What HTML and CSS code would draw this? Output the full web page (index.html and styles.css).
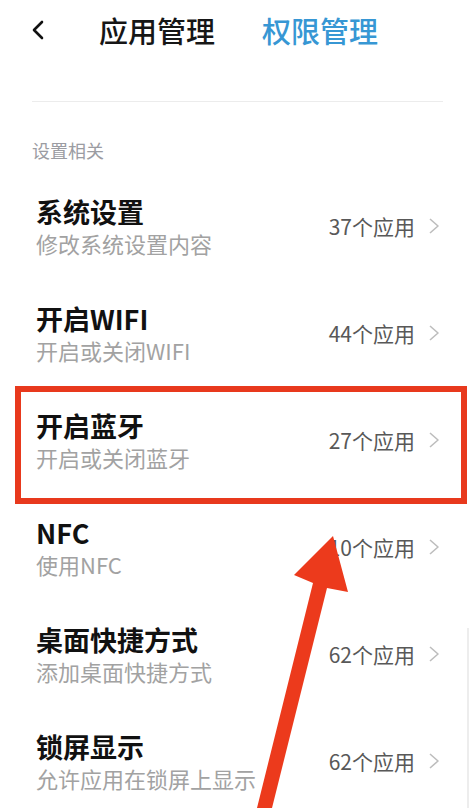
FILE: index.html
```html
<!DOCTYPE html>
<html lang="zh-CN">
<head>
<meta charset="utf-8">
<link rel="stylesheet" href="styles.css">
</head>
<body>
<div class="screen">
  <header class="topbar">
    <svg class="back" width="14" height="20" viewBox="0 0 14 20"><polyline points="11,2 3,10 11,18" fill="none" stroke="#111" stroke-width="2.6" stroke-linecap="round" stroke-linejoin="round"/></svg>
    <span class="tab">应用管理</span>
    <span class="tab active">权限管理</span>
  </header>
  <div class="divider"></div>
  <div class="section-label">设置相关</div>
  <ul class="list">
    <li class="row"><div class="text"><div class="title">系统设置</div><div class="sub">修改系统设置内容</div></div><div class="count">37个应用</div><svg class="chev" width="12" height="18" viewBox="0 0 12 18"><polyline points="2,2 10,9 2,16" fill="none" stroke="#bdbdbd" stroke-width="1.6" stroke-linejoin="round"/></svg></li>
    <li class="row"><div class="text"><div class="title">开启WIFI</div><div class="sub">开启或关闭WIFI</div></div><div class="count">44个应用</div><svg class="chev" width="12" height="18" viewBox="0 0 12 18"><polyline points="2,2 10,9 2,16" fill="none" stroke="#bdbdbd" stroke-width="1.6" stroke-linejoin="round"/></svg></li>
    <li class="row"><div class="text"><div class="title">开启蓝牙</div><div class="sub">开启或关闭蓝牙</div></div><div class="count">27个应用</div><svg class="chev" width="12" height="18" viewBox="0 0 12 18"><polyline points="2,2 10,9 2,16" fill="none" stroke="#bdbdbd" stroke-width="1.6" stroke-linejoin="round"/></svg></li>
    <li class="row"><div class="text"><div class="title">NFC</div><div class="sub">使用NFC</div></div><div class="count">10个应用</div><svg class="chev" width="12" height="18" viewBox="0 0 12 18"><polyline points="2,2 10,9 2,16" fill="none" stroke="#bdbdbd" stroke-width="1.6" stroke-linejoin="round"/></svg></li>
    <li class="row"><div class="text"><div class="title">桌面快捷方式</div><div class="sub">添加桌面快捷方式</div></div><div class="count">62个应用</div><svg class="chev" width="12" height="18" viewBox="0 0 12 18"><polyline points="2,2 10,9 2,16" fill="none" stroke="#bdbdbd" stroke-width="1.6" stroke-linejoin="round"/></svg></li>
    <li class="row"><div class="text"><div class="title">锁屏显示</div><div class="sub">允许应用在锁屏上显示</div></div><div class="count">62个应用</div><svg class="chev" width="12" height="18" viewBox="0 0 12 18"><polyline points="2,2 10,9 2,16" fill="none" stroke="#bdbdbd" stroke-width="1.6" stroke-linejoin="round"/></svg></li>
  </ul>
  <div class="highlight"></div>
  <div class="edge"></div>
  <svg class="arrow" width="475" height="808" viewBox="0 0 475 808">
    <polygon points="333,536 294,575 313,583 257,808 272,808 327,588 348,592" fill="#ec3a1c"/>
  </svg>
</div>
</body>
</html>
```
FILE: styles.css
```css
* { box-sizing: border-box; }
html, body { margin: 0; padding: 0; background: #fff; }
body { font-family: "Noto Sans CJK SC", "Noto Sans", sans-serif; }
.screen { position: relative; width: 475px; height: 808px; overflow: hidden; background: #fff; }

.topbar { height: 60px; display: flex; align-items: center; padding-left: 31px; }
.back { margin-top: 0; margin-right: 54px; }
.tab { font-size: 29px; font-weight: 500; color: #161616; line-height: 40px; letter-spacing: 0; }
.tab.active { color: #3797d4; margin-left: 47px; }

.divider { margin: 41px 32px 0 32px; height: 1px; background: #ececec; }

.section-label { padding: 35px 0 0 32px; height: 70px; font-size: 18px; line-height: 26px; color: #9b9ca2; }

.list { list-style: none; margin: 0; padding: 0; }
.row { height: 107px; display: flex; align-items: center; padding: 0 35px 0 36px; }
.text { flex: 1; display: flex; flex-direction: column; }
.title { font-size: 27px; font-weight: 700; color: #111; line-height: 34px; }
.sub { font-size: 22px; color: #a2a2a2; line-height: 28px; }
.count { font-size: 21px; color: #585858; line-height: 28px; margin-right: 13px; }
.chev { display: block; }

.highlight { position: absolute; left: 15px; top: 386px; width: 452px; height: 118px; border: 6px solid #e8391d; }
.edge { position: absolute; left: 467px; top: 628px; width: 2px; height: 180px; background: #ededed; }
.arrow { position: absolute; left: 0; top: 0; }
```
